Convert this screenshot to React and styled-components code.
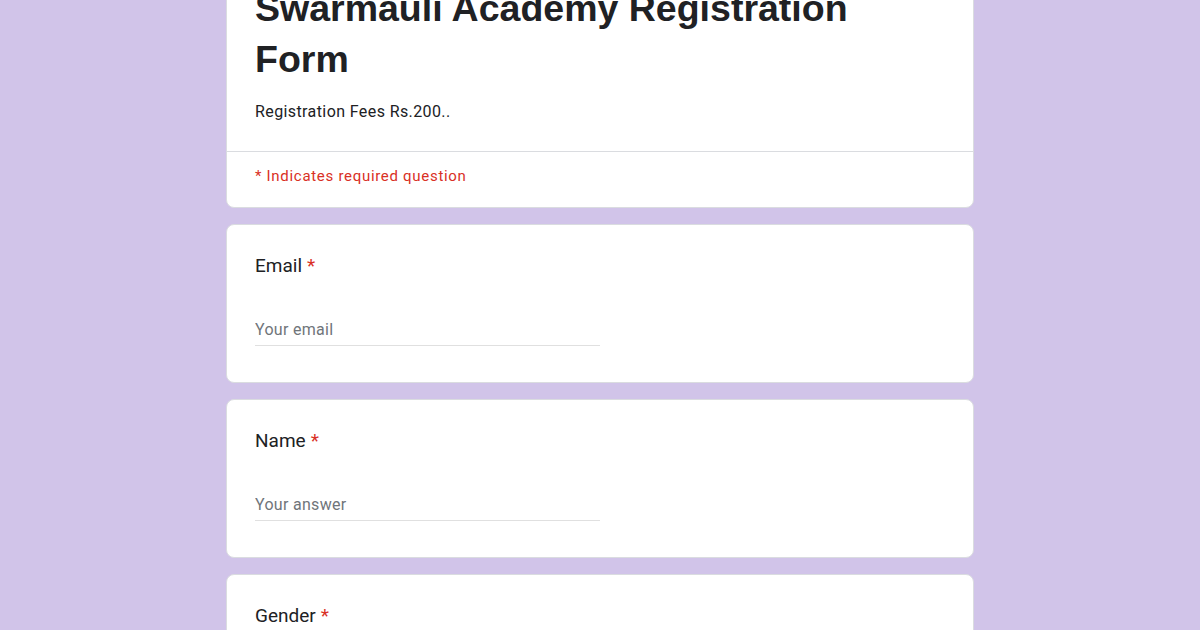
import React from "react";
import styled, { createGlobalStyle } from "styled-components";

const GlobalStyle = createGlobalStyle`
  html, body {
    margin: 0;
    padding: 0;
    background: #d1c4e9;
    overflow: hidden;
  }
  * {
    box-sizing: border-box;
  }
`;

const Page = styled.div`
  width: 748px;
  margin: -42px auto 0;
  display: flex;
  flex-direction: column;
  gap: 16px;
`;

const Card = styled.div`
  background: #ffffff;
  border: 1px solid #dadce0;
  border-radius: 8px;
  overflow: hidden;
`;

const HeaderTop = styled.div`
  padding: 24px 28px 27px;
`;

const Title = styled.h1`
  margin: 0;
  padding-right: 12px;
  font-family: "Liberation Sans", Arial, sans-serif;
  font-weight: 700;
  font-size: 37.5px;
  line-height: 51px;
  color: #202124;
`;

const Description = styled.p`
  margin: 15px 0 0;
  font-family: Roboto, "Liberation Sans", sans-serif;
  font-size: 16px;
  line-height: 24px;
  letter-spacing: 0.4px;
  color: #202124;
`;

const Divider = styled.div`
  height: 1px;
  background: #dadce0;
`;

const Required = styled.p`
  margin: 0;
  padding: 14px 28px 21px;
  font-family: Roboto, "Liberation Sans", sans-serif;
  font-size: 15px;
  line-height: 20px;
  letter-spacing: 0.7px;
  color: #d93025;
`;

const Question = styled(Card)`
  padding: 29px 28px 36px;
`;

const Label = styled.div`
  font-family: Roboto, "Liberation Sans", sans-serif;
  font-size: 19px;
  line-height: 24px;
  color: #202124;
`;

const Star = styled.span`
  color: #d93025;
  margin-left: 5px;
`;

const Answer = styled.input`
  display: block;
  width: 50%;
  margin-top: 39px;
  padding: 0 0 4px;
  border: none;
  border-bottom: 1px solid #e0e0e0;
  outline: none;
  background: transparent;
  font-family: Roboto, "Liberation Sans", sans-serif;
  font-size: 16px;
  line-height: 24px;
  height: 29px;
  color: #202124;
  &::placeholder {
    color: #70757a;
    letter-spacing: 0.3px;
  }
`;

const questions = [
  { label: "Email", placeholder: "Your email" },
  { label: "Name", placeholder: "Your answer" },
  { label: "Gender", placeholder: "Your answer" },
];

export default function App() {
  return (
    <>
      <GlobalStyle />
      <Page>
        <Card>
          <HeaderTop>
            <Title>Swarmauli Academy Registration Form</Title>
            <Description>Registration Fees Rs.200..</Description>
          </HeaderTop>
          <Divider />
          <Required>* Indicates required question</Required>
        </Card>
        {questions.map((q) => (
          <Question key={q.label}>
            <Label>
              {q.label}
              <Star>*</Star>
            </Label>
            <Answer type="text" placeholder={q.placeholder} />
          </Question>
        ))}
      </Page>
    </>
  );
}
